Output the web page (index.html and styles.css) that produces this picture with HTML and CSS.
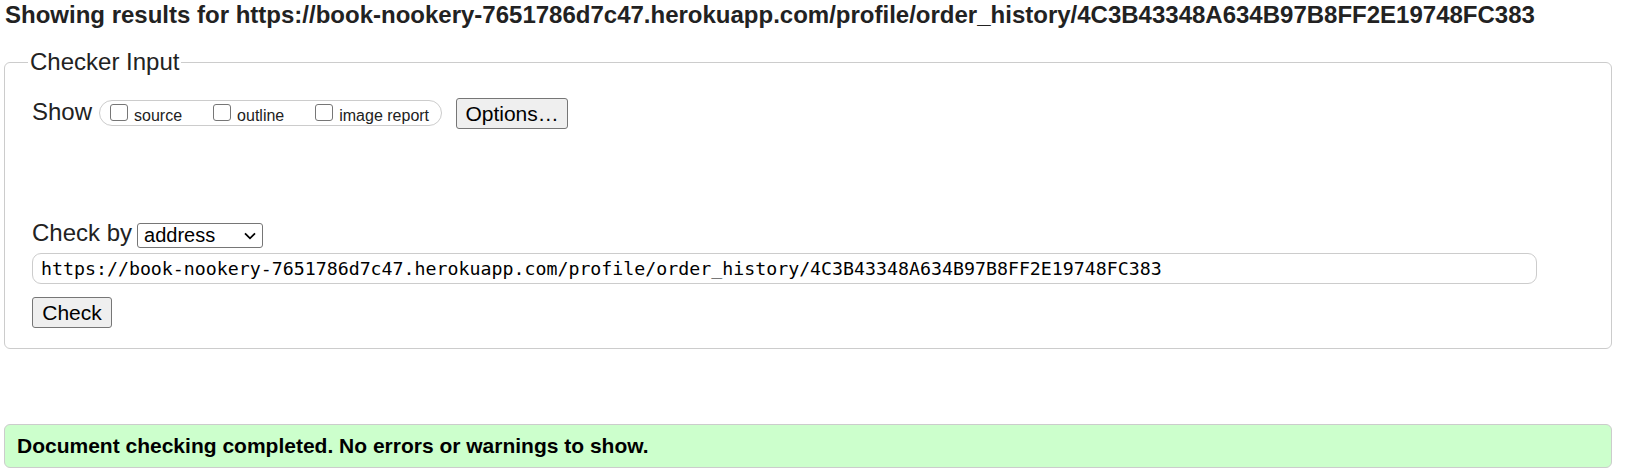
FILE: index.html
```html
<!DOCTYPE html>
<html>
<head>
<meta charset="utf-8">
<link rel="stylesheet" href="styles.css">
</head>
<body>
<div class="page">
  <h2 class="title">Showing results for https://book-nookery-7651786d7c47.herokuapp.com/profile/order_history/4C3B43348A634B97B8FF2E19748FC383</h2>
  <fieldset class="checker">
    <legend class="legend">Checker Input</legend>
    <div class="show-row">
      <span class="label">Show</span>
      <span class="pill"><label class="opt"><span class="box"></span>source</label><label class="opt"><span class="box"></span>outline</label><label class="opt"><span class="box"></span>image report</label></span>
      <button class="btn btn-options">Options…</button>
    </div>
    <div class="by-row">
      <span class="label label-by">Check by</span>
      <span class="select">address<svg class="chev" width="12" height="8" viewBox="0 0 12 8"><path d="M1 1.3 L6 6.3 L11 1.3" fill="none" stroke="#000" stroke-width="1.8"/></svg></span>
    </div>
    <div class="url">https://book-nookery-7651786d7c47.herokuapp.com/profile/order_history/4C3B43348A634B97B8FF2E19748FC383</div>
    <div class="check-row"><button class="btn btn-check">Check</button></div>
  </fieldset>
  <div class="success">Document checking completed. No errors or warnings to show.</div>
</div>
</body>
</html>
```
FILE: styles.css
```css
html, body { margin: 0; padding: 0; background: #fff; }
body { font-family: "Liberation Sans", Arial, sans-serif; color: #1a1a1a; }
.page { padding: 0 23px 0 4px; }
.title {
  margin: 0; padding: 1px 0 0 1px;
  font-size: 24px; line-height: 28px; font-weight: bold; color: #222;
  white-space: nowrap;
}
.checker {
  margin: 19px 0 0 0;
  border: 1px solid #ccc; border-radius: 6px;
  padding: 0 0 20px 27px;
}
.legend {
  font-size: 24px; line-height: 28px; color: #222;
  padding: 0 2px; margin-left: -4px;
}
.show-row { display: flex; align-items: flex-start; margin-top: 22px; height: 32px; }
.label { font-size: 24px; line-height: 26px; color: #222; margin-right: 7px; padding-top: 1px; }
.label-by { margin-right: 5px; padding-top: 0; }
.pill {
  display: block; margin-top: 2px;
  height: 26px; box-sizing: border-box;
  border: 1px solid #ccc; border-radius: 13px;
  padding: 3px 12px 0 10px;
  font-size: 16px; line-height: 21px; color: #222; white-space: nowrap;
}
.opt { margin-right: 31px; }
.opt:last-child { margin-right: 0; }
.box {
  display: inline-block; vertical-align: baseline;
  width: 18px; height: 17px; border: 1px solid #767676; border-radius: 3px;
  box-sizing: border-box; margin-right: 6px; margin-bottom: 0; background: #fff;
}
.btn {
  font-family: "Liberation Sans", Arial, sans-serif;
  background: #efefef; border: 1px solid #767676; border-radius: 3px;
  color: #000; padding: 0; box-sizing: border-box; line-height: 1;
}
.btn-options { margin-left: 14px; width: 112px; height: 31px; font-size: 21px; }
.by-row { display: flex; align-items: flex-start; margin-top: 90px; height: 28px; }
.select {
  display: flex; align-items: center; justify-content: space-between;
  margin-top: 3px;
  width: 126px; height: 25px; box-sizing: border-box;
  border: 1px solid #767676; border-radius: 3px; padding: 0 6px 0 6px;
  font-size: 20px; color: #000; background: #fff;
}
.chev { margin-top: 1px; }
.url {
  margin-top: 5px; margin-right: 74px;
  height: 31px; box-sizing: border-box;
  border: 1px solid #ccc; border-radius: 9px;
  padding: 0 0 0 8px;
  font-family: "DejaVu Sans Mono", monospace; font-size: 18.25px; line-height: 29px; color: #000;
  white-space: nowrap;
}
.check-row { margin-top: 13px; height: 31px; }
.btn-check { width: 80px; height: 31px; font-size: 21px; }
.success {
  margin-top: 75px;
  background: #ccffcc; border: 1px solid #ccc; border-radius: 6px;
  height: 44px; box-sizing: border-box;
  padding: 0 0 0 12px;
  font-size: 21px; font-weight: bold; color: #000; line-height: 42px;
}
```
